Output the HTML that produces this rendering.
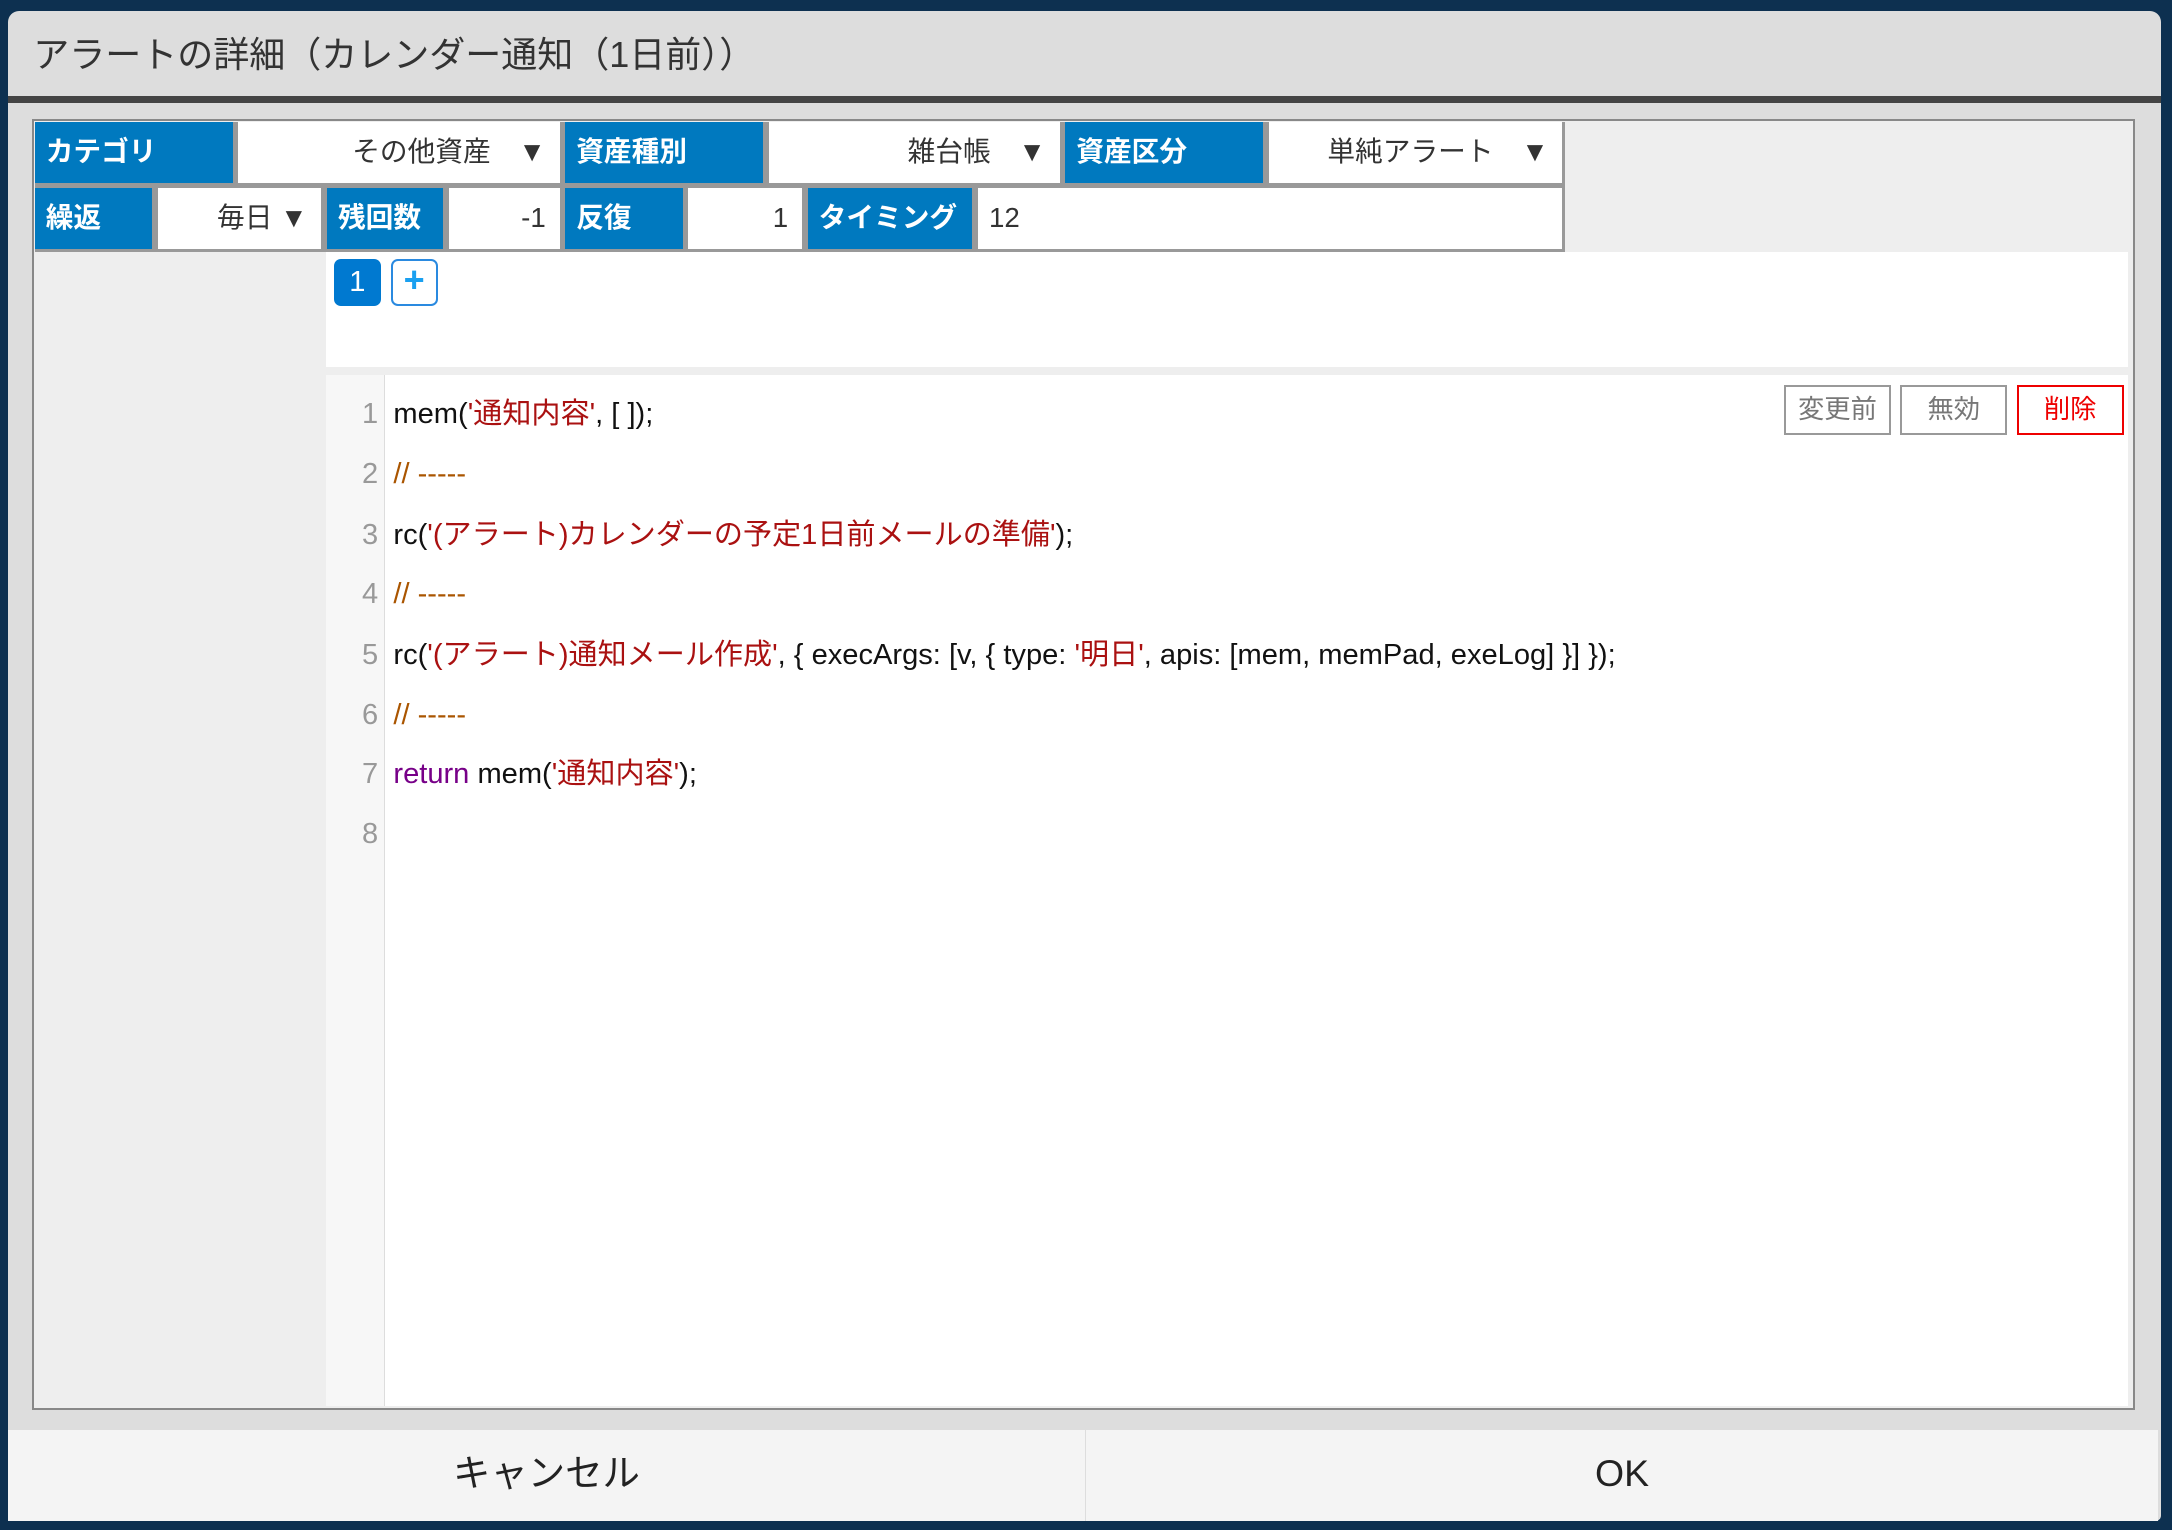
<!DOCTYPE html>
<html><head><meta charset="utf-8"><style>
html,body{margin:0;padding:0;background:#0d3050;overflow:hidden;width:2172px;height:1530px}
#w{zoom:1.38520;position:relative;width:1568px;height:1105px;font-family:"Liberation Sans","Noto Sans CJK JP",sans-serif}
.a{position:absolute;box-sizing:border-box}
.lb{background:#0079bf;color:#fff;font-size:20px;font-weight:bold;line-height:44px;height:44px;padding-left:8px}
.sel{background:#fff;color:#333;font-size:20px;line-height:44px;height:44px;text-align:right;padding-right:10px}
.code{position:absolute;left:284px;font-size:21px;line-height:26px;height:26px;color:#111;white-space:pre}
.ln{position:absolute;left:235px;width:38px;text-align:right;font-size:21px;line-height:26px;color:#999}
.s{color:#a11}.c{color:#a50}.k{color:#708}
.btn{position:absolute;top:278px;height:36px;width:77px;border:2px solid #999;background:#fff;color:#777;font-size:19px;text-align:center;line-height:32px;box-sizing:border-box}
</style></head><body><div id="w">
<div class="a" style="left:6px;top:8px;width:1554px;height:1090px;background:#ddd;border-radius:8px 8px 4px 4px"></div>
<div class="a" style="left:24px;top:22px;font-size:26px;line-height:36px;color:#333">アラートの詳細（カレンダー通知（1日前））</div>
<div class="a" style="left:6px;top:69px;width:1554px;height:5px;background:#444"></div>
<div class="a" style="left:23px;top:86px;width:1518px;height:932px;border:2px solid #888;background:#eee"></div>
<div class="a" style="left:25px;top:88px;width:1105px;height:94px;background:#999"></div>
<div class="a lb" style="left:25px;top:88px;width:143px">カテゴリ</div>
<div class="a sel" style="left:172px;top:88px;width:232px">その他資産　▼</div>
<div class="a lb" style="left:408px;top:88px;width:143px">資産種別</div>
<div class="a sel" style="left:555px;top:88px;width:210px">雑台帳　▼</div>
<div class="a lb" style="left:769px;top:88px;width:143px">資産区分</div>
<div class="a sel" style="left:916px;top:88px;width:212px">単純アラート　▼</div>
<div class="a lb" style="left:25px;top:136px;width:85px">繰返</div>
<div class="a sel" style="left:114px;top:136px;width:118px">毎日 ▼</div>
<div class="a lb" style="left:236px;top:136px;width:84px">残回数</div>
<div class="a sel" style="left:324px;top:136px;width:80px">-1</div>
<div class="a lb" style="left:408px;top:136px;width:85px">反復</div>
<div class="a sel" style="left:497px;top:136px;width:82px">1</div>
<div class="a lb" style="left:583px;top:136px;width:119px">タイミング</div>
<div class="a sel" style="left:706px;top:136px;width:422px;text-align:left;padding-left:8px">12</div>
<div class="a" style="left:235px;top:182px;width:1301px;height:83px;background:#fff"></div>
<div class="a" style="left:241px;top:187px;width:34px;height:34px;background:#0079d0;border-radius:5px;color:#fff;font-size:21px;text-align:center;line-height:34px">1</div>
<div class="a" style="left:282px;top:187px;width:34px;height:34px;background:#fff;border:2px solid #2a8ae0;border-radius:5px;color:#1aa0f0;font-size:26px;font-weight:bold;text-align:center;line-height:28px">+</div>
<div class="a" style="left:235px;top:271px;width:1301px;height:744px;background:#fff"></div>
<div class="a" style="left:235px;top:271px;width:43px;height:744px;background:#f7f7f7;border-right:1px solid #ddd"></div>
<div class="ln" style="top:286px">1</div><div class="code" style="top:286px">mem(<span class="s">'通知内容'</span>, [ ]);</div>
<div class="ln" style="top:329px">2</div><div class="code c" style="top:329px">// -----</div>
<div class="ln" style="top:373px">3</div><div class="code" style="top:373px">rc(<span class="s">'(アラート)カレンダーの予定1日前メールの準備'</span>);</div>
<div class="ln" style="top:416px">4</div><div class="code c" style="top:416px">// -----</div>
<div class="ln" style="top:460px">5</div><div class="code" style="top:460px">rc(<span class="s">'(アラート)通知メール作成'</span>, { execArgs: [v, { type: <span class="s">'明日'</span>, apis: [mem, memPad, exeLog] }] });</div>
<div class="ln" style="top:503px">6</div><div class="code c" style="top:503px">// -----</div>
<div class="ln" style="top:546px">7</div><div class="code" style="top:546px"><span class="k">return</span> mem(<span class="s">'通知内容'</span>);</div>
<div class="ln" style="top:589px">8</div>
<div class="btn" style="left:1288px">変更前</div>
<div class="btn" style="left:1372px">無効</div>
<div class="btn" style="left:1456px;border-color:#e00;color:#e00">削除</div>
<div class="a" style="left:6px;top:1032px;width:1552px;height:66px;background:#f4f4f4"></div>
<div class="a" style="left:783px;top:1032px;width:1px;height:66px;background:#ddd"></div>
<div class="a" style="left:6px;top:1046px;width:777px;text-align:center;font-size:27px;line-height:36px;color:#222">キャンセル</div>
<div class="a" style="left:784px;top:1046px;width:774px;text-align:center;font-size:27px;line-height:36px;color:#222">OK</div>
</div></body></html>
